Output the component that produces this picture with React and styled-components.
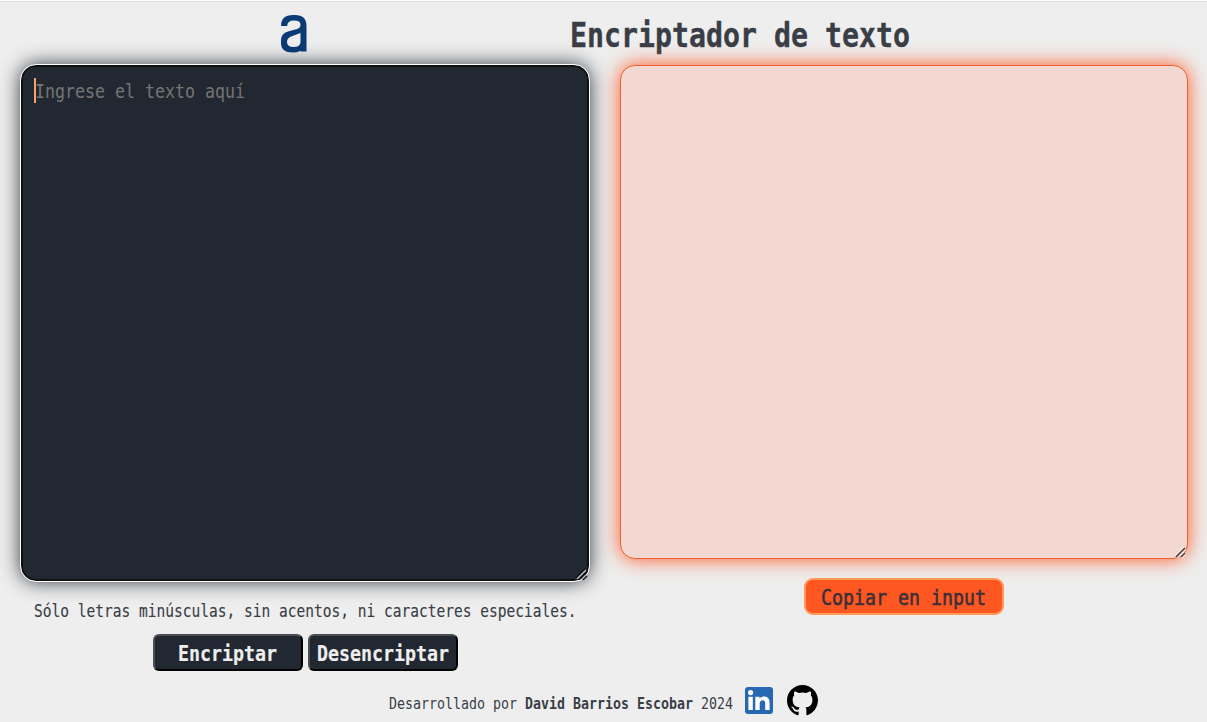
import React from "react";
import styled, { createGlobalStyle } from "styled-components";

const Global = createGlobalStyle`
  * { box-sizing: border-box; }
  body { margin: 0; background: #eee; color: #393e46; overflow: hidden;
    font-family: "DejaVu Sans Mono", "Liberation Mono", monospace; }
`;

/* Condensed monospace: every glyph advances by $adv pixels. */
const FACE_RATIO = 0.602;
const fontSize = (adv) => adv * 2;

const Slot = styled.span`
  display: inline-block;
  width: ${(p) => p.$adv * p.$count}px;
  font-size: ${(p) => fontSize(p.$adv)}px;
  font-weight: ${(p) => (p.$bold ? 700 : 400)};
  -webkit-text-stroke: ${(p) => p.$stroke || 0}px currentColor;
  line-height: 1.2;
  white-space: pre;
  text-align: left;
`;
const Squeeze = styled.span`
  display: inline-block;
  transform: scaleX(${(p) => p.$adv / (FACE_RATIO * fontSize(p.$adv))});
  transform-origin: 0 50%;
`;
function Mono({ adv, bold, stroke, children }) {
  return (
    <Slot $adv={adv} $count={children.length} $bold={bold} $stroke={stroke}>
      <Squeeze $adv={adv}>{children}</Squeeze>
    </Slot>
  );
}

const Page = styled.div`
  height: 722px;
  display: flex;
  flex-direction: column;
  border-top: 1px solid #fff;
`;
const Header = styled.header`
  height: 64px;
  border-top: 1px solid #dcdfe0;
  display: flex;
  justify-content: space-between;
  padding: 13px 297.5px 0 281px;
`;
const Title = styled.h1`
  margin: 0;
  font-size: 34px;
  line-height: 40px;
  height: 40px;
`;
const Main = styled.main`
  flex: 1;
  display: flex;
  gap: 31px;
  padding: 0 19px 0 21px;
`;
const Column = styled.section`
  width: 568px;
  display: flex;
  flex-direction: column;
  align-items: center;
`;
const Field = styled.div`
  position: relative;
  width: 100%;
  display: flex;
`;
const Area = styled.textarea`
  width: 100%;
  border-radius: 15px;
  padding: 12px;
  margin: 0;
  font-size: 20px;
  outline: none;
  resize: none;
`;
const InputArea = styled(Area)`
  height: 516px;
  color: #eee;
  background: #222831;
  border: 2px solid #101010;
  outline: 1px solid #fff;
  box-shadow: 0 0 20px #222831;
`;
const OutputArea = styled(Area)`
  height: 494px;
  background: #f2d8d0;
  border: 1px solid #f0602f;
  box-shadow: 0 0 20px #ff5722;
`;
const Grip = styled.svg`
  position: absolute;
  right: 1px;
  bottom: 1px;
`;
const Hint = styled.div`
  position: absolute;
  left: 13px;
  top: 13px;
  height: 25px;
  display: flex;
  align-items: center;
  color: #757575;
  pointer-events: none;
  &::before {
    content: "";
    width: 2px;
    height: 25px;
    margin-right: -1px;
    background: #ffa069;
  }
`;
const Note = styled.p`
  margin: 19px 0 0;
  height: 22px;
  line-height: 22px;
  font-size: 17px;
`;
const Buttons = styled.div`
  display: flex;
  gap: 5px;
  margin-top: 12px;
`;
const Button = styled.button`
  width: 150px;
  height: 37px;
  padding: 4px 0 0;
  display: flex;
  align-items: center;
  justify-content: center;
  border-radius: 6px;
  background: #222831;
  color: #eee;
  border: 2px solid;
  border-color: #4c4e51 #000 #000 #4c4e51;
  font-family: inherit;
`;
const CopyButton = styled(Button)`
  width: 200px;
  margin-top: 19px;
  padding-right: 2px;
  border-radius: 9px;
  border-color: #ff9a5c;
  background: #ff5722;
  color: #393037;
`;
const Footer = styled.footer`
  height: 42px;
  display: flex;
  padding: 5px 0 0 389px;
`;
const Credit = styled.div`
  display: flex;
  margin-top: 9px;
  height: 20px;
  margin-right: 12px;
`;
const LinkedIn = styled.svg`
  display: block;
  margin: 2px 14px 0 0;
`;

function ResizeGrip({ dark }) {
  return (
    <Grip width="12" height="12" viewBox="0 0 12 12">
      <path d="M1 11L10 2M6 11L10 7" fill="none" stroke={dark ? "#080a0d" : "#f7e9e5"} strokeWidth="4" />
      <path d="M1 11L10 2M6 11L10 7" fill="none" stroke={dark ? "#b9bbbe" : "#49383a"} strokeWidth="1.6" />
    </Grip>
  );
}

export default function App() {
  return (
    <Page>
      <Global />
      <Header>
        <svg width="26" height="38" viewBox="0 0 26 38">
          <path
            d="M0 11Q0 0 12 0H14Q25.5 0 25.5 11V36.5H20L19 36Q16.5 37.5 12 37.5Q0 37.5 0 28V25Q0 18.5 7 16.5L16 14Q19.5 13 19.5 9.5Q19.5 5.5 13 5.5Q6.2 5.5 6.2 11ZM19.5 18L10 21.5Q6 23 6 27Q6 32 12.5 32Q19.5 32 19.5 27Z"
            fill="#0b3b75" fillRule="evenodd"
          />
        </svg>
        <Title><Mono adv={17} bold stroke={0.4}>Encriptador de texto</Mono></Title>
      </Header>
      <Main>
        <Column>
          <Field>
            <InputArea aria-label="Texto" />
            <Hint><Mono adv={10}>Ingrese el texto aquí</Mono></Hint>
            <ResizeGrip dark />
          </Field>
          <Note>
            <Mono adv={8.75} stroke={0.15}>
              Sólo letras minúsculas, sin acentos, ni caracteres especiales.
            </Mono>
          </Note>
          <Buttons>
            <Button><Mono adv={11} bold stroke={0.2}>Encriptar</Mono></Button>
            <Button><Mono adv={11} bold stroke={0.2}>Desencriptar</Mono></Button>
          </Buttons>
        </Column>
        <Column>
          <Field>
            <OutputArea aria-label="Resultado" readOnly />
            <ResizeGrip />
          </Field>
          <CopyButton><Mono adv={11} stroke={0.6}>Copiar en input</Mono></CopyButton>
        </Column>
      </Main>
      <Footer>
        <Credit>
          <Mono adv={8}>{"Desarrollado por "}</Mono>
          <Mono adv={8} bold>{"David Barrios Escobar "}</Mono>
          <Mono adv={8}>2024</Mono>
        </Credit>
        <LinkedIn width="28" height="27" viewBox="0 0 28 27">
          <rect width="28" height="27" rx="3" fill="#2867b2" />
          <circle cx="5.6" cy="5.6" r="2.6" fill="#fff" />
          <path
            d="M3.4 9.8h4.4V23H3.4zM10.3 9.8h4.2v1.8c.7-1.2 2.2-2.2 4.3-2.2 4.3 0 5.8 2.6 5.8 6.5V23h-4.4v-6.4c0-1.8-.5-3.3-2.5-3.3s-3 1.4-3 3.3V23h-4.4z"
            fill="#fff"
          />
        </LinkedIn>
        <svg width="31" height="31" viewBox="0 0 16 16">
          <path d="M8 0C3.58 0 0 3.58 0 8c0 3.54 2.29 6.53 5.47 7.59.4.07.55-.17.55-.38 0-.19-.01-.82-.01-1.49-2.01.37-2.53-.49-2.69-.94-.09-.23-.48-.94-.82-1.13-.28-.15-.68-.52-.01-.53.63-.01 1.08.58 1.23.82.72 1.21 1.87.87 2.33.66.07-.52.28-.87.51-1.07-1.78-.2-3.64-.89-3.64-3.95 0-.87.31-1.59.82-2.15-.08-.2-.36-1.02.08-2.12 0 0 .67-.21 2.2.82.64-.18 1.32-.27 2-.27s1.36.09 2 .27c1.53-1.04 2.2-.82 2.2-.82.44 1.1.16 1.92.08 2.12.51.56.82 1.27.82 2.15 0 3.07-1.87 3.75-3.65 3.95.29.25.54.73.54 1.48 0 1.07-.01 1.93-.01 2.2 0 .21.15.46.55.38A8.01 8.01 0 0 0 16 8c0-4.42-3.58-8-8-8z" />
        </svg>
      </Footer>
    </Page>
  );
}
